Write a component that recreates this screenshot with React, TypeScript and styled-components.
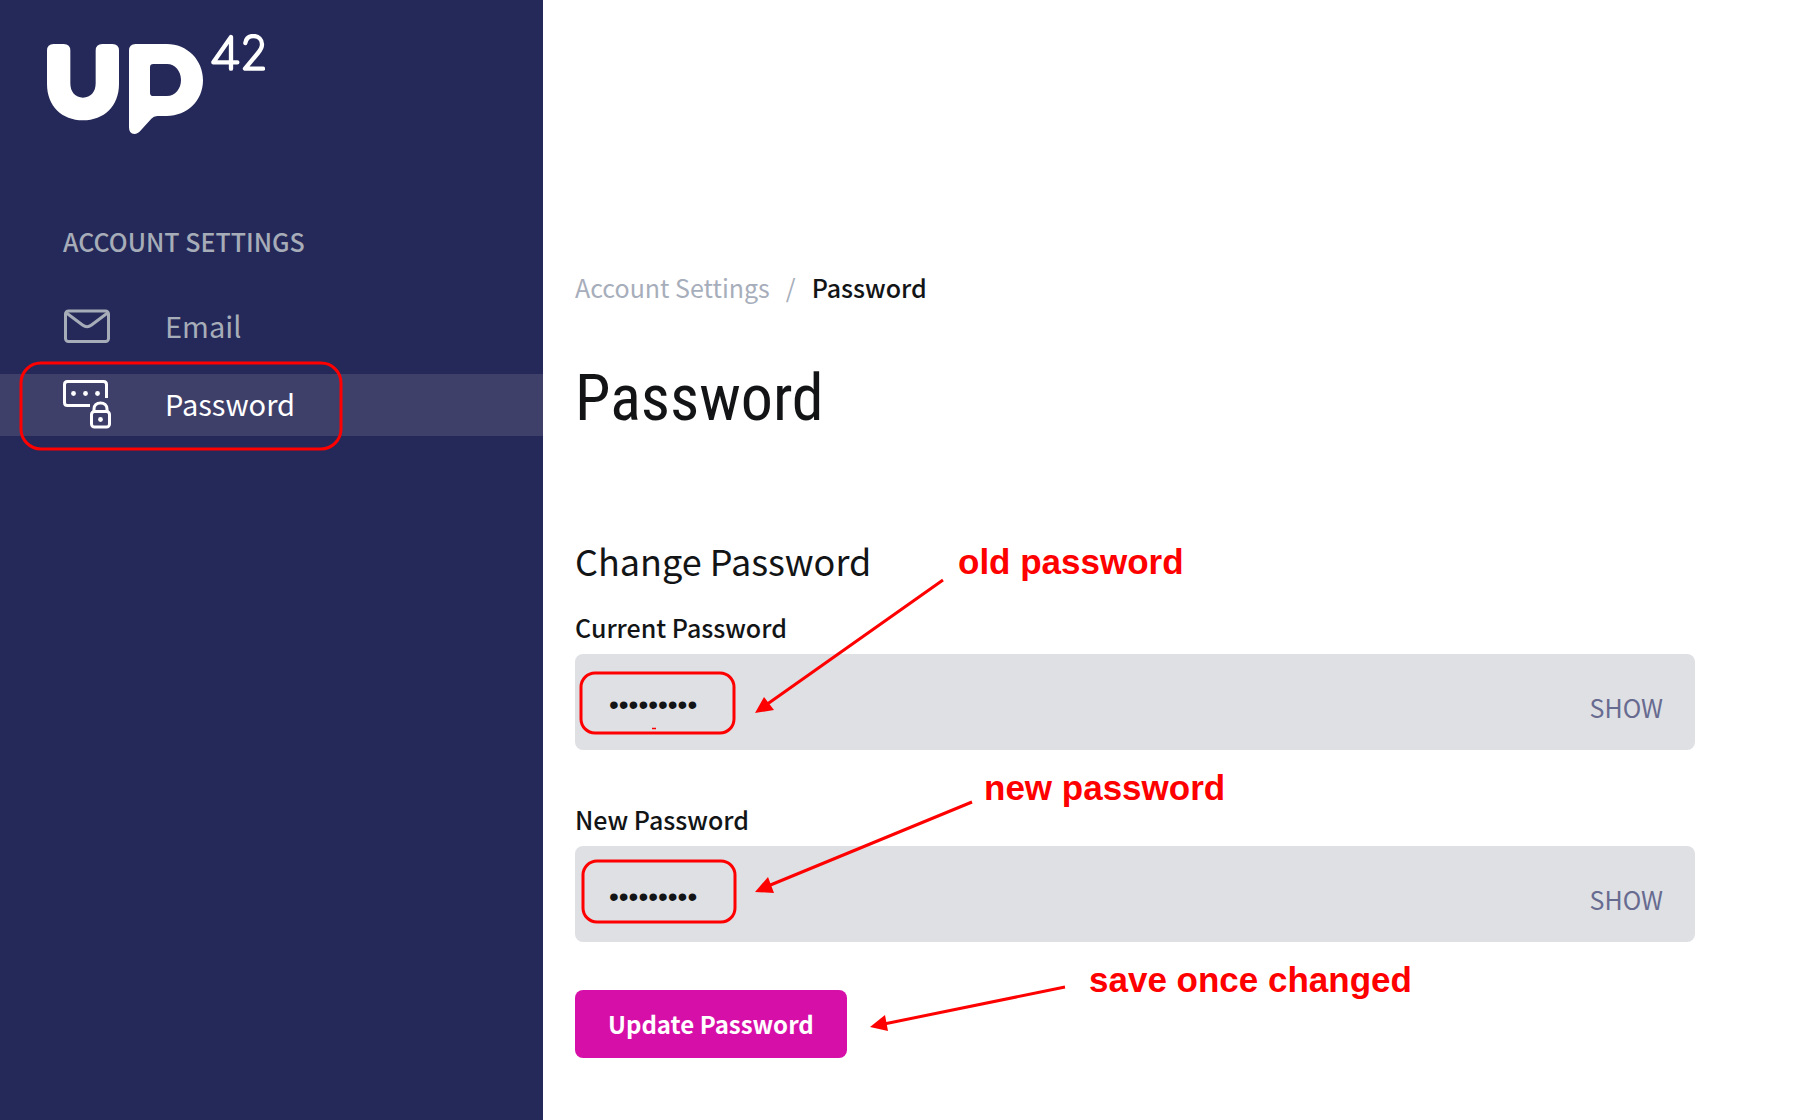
import React, { useState } from "react";
import styled, { createGlobalStyle } from "styled-components";

const sans = `"Source Sans Pro", "Noto Sans CJK SC", "Noto Sans", sans-serif`;

const GlobalStyle = createGlobalStyle`
  *, *::before, *::after { box-sizing: border-box; }
  body {
    margin: 0;
    background: #ffffff;
    color: #121416;
    font-family: ${sans};
    font-size: 25px;
  }
  button, input { font: inherit; }
`;

const Page = styled.div`
  position: relative;
  display: flex;
  min-height: 100vh;
`;

const Sidebar = styled.aside`
  flex: 0 0 543px;
  padding-top: 34px;
  background: #252959;
`;

const HomeLink = styled.a`
  display: block;
  width: 218px;
  height: 100px;
  margin-left: 47px;
  svg { display: block; }
`;

const NavHeading = styled.h2`
  margin: 89px 0 37px 63px;
  color: #a7adb8;
  font-size: 25px;
  font-weight: 500;
  line-height: 36px;
`;

const NavList = styled.ul`
  display: flex;
  flex-direction: column;
  gap: 16px;
  margin: 0;
  padding: 0;
  list-style: none;
`;

const NavLink = styled.a<{ $active?: boolean }>`
  display: flex;
  align-items: center;
  gap: 54px;
  height: 62px;
  padding-left: 63px;
  background: ${(p) => (p.$active ? "#3f406a" : "transparent")};
  color: ${(p) => (p.$active ? "#ffffff" : "#a7adb8")};
  font-size: 29px;
  line-height: 58px;
  text-decoration: none;
`;

const NavText = styled.span`
  padding-bottom: 4px;
`;

const Main = styled.main`
  flex: 1;
  padding: 267px 112px 62px 32px;
`;

const Breadcrumb = styled.nav`
  display: flex;
  gap: 16px;
  color: #a7aebb;
  line-height: 40px;
  a { color: inherit; text-decoration: none; }
  strong { color: #121416; font-weight: 500; }
`;

const Title = styled.h1`
  margin: 52px 0 97px;
  font-family: "Roboto Condensed", Roboto, sans-serif;
  font-size: 64px;
  font-weight: 400;
  line-height: 80px;
`;

const SectionTitle = styled.h2`
  margin: 0 0 25px;
  font-size: 36px;
  font-weight: 400;
  line-height: 48px;
`;

const Form = styled.form`
  display: flex;
  flex-direction: column;
  align-items: flex-start;
  gap: 48px;
`;

const Fields = styled.div`
  display: flex;
  flex-direction: column;
  gap: 51px;
  width: 100%;
`;

const Label = styled.label`
  display: block;
  margin-bottom: 9px;
  font-weight: 500;
  line-height: 36px;
`;

const InputBox = styled.div`
  display: flex;
  height: 96px;
  padding-top: 6px;
  border-radius: 8px;
  background: #dfe0e4;
`;

const Input = styled.input`
  flex: 1;
  min-width: 0;
  padding: 0 0 0 34px;
  border: 0;
  outline: 0;
  background: transparent;
  color: #121416;
  font-family: "Liberation Sans", Arial, sans-serif;
  font-size: 28px;
`;

const Toggle = styled.button`
  padding: 4px 32px 0;
  border: 0;
  background: transparent;
  color: #686b90;
  line-height: 36px;
  cursor: pointer;
`;

const Submit = styled.button`
  height: 68px;
  padding: 0 33px;
  border: 0;
  border-radius: 8px;
  background: #d60fa8;
  color: #ffffff;
  font-size: 24px;
  font-weight: 700;
  line-height: 36px;
  cursor: pointer;
`;

const Annotations = styled.div`
  position: absolute;
  inset: 0;
  pointer-events: none;
  svg { position: absolute; top: 0; left: 0; }
`;

const Note = styled.span<{ $x: number; $y: number }>`
  position: absolute;
  left: ${(p) => p.$x}px;
  top: ${(p) => p.$y}px;
  color: #ff0000;
  font-family: "Liberation Sans", Arial, sans-serif;
  font-size: 35px;
  font-weight: 700;
  line-height: 40px;
  white-space: nowrap;
`;

const Logo = () => (
  <svg width="218" height="101" viewBox="51 42 654 303" role="img" aria-label="UP42">
    <g fill="#fff">
      <path d="M51 92Q51 72 71 72H101Q121 72 121 92V190C121 216 136 233 159 233S197 216 197 190V92Q197 72 217 72H247Q267 72 267 92V192C267 258 222 301 159 301S51 258 51 192Z" />
      <path
        fillRule="evenodd"
        d="M297 92Q297 72 317 72H410C472 72 519 120 519 181S472 288 410 288H382Q371 288 364 296L334 329Q323 342 313 342Q297 342 297 322ZM370 132Q360 132 360 142V218Q360 228 370 228H411C436 228 453 206 453 180S436 132 411 132Z"
      />
    </g>
    <path
      d="M622 127H550L603 51V146M646 69C648 55 657 48 670 48C686 48 696 59 696 73C696 84 691 91 684 99L645 146H699"
      fill="none"
      stroke="#fff"
      strokeWidth="13"
      strokeLinecap="round"
      strokeLinejoin="round"
    />
  </svg>
);

const MailIcon = () => (
  <svg width="48" height="48" viewBox="0 0 48 48" fill="none" stroke="currentColor" strokeWidth="3" aria-hidden="true">
    <rect x="2.5" y="8" width="43" height="30.5" rx="3" />
    <path d="M3.5 10L19.5 22Q24 25.5 28.5 22L44.5 10" />
  </svg>
);

const PasswordIcon = () => (
  <svg width="48" height="50" viewBox="0 0 48 50" fill="none" stroke="currentColor" strokeWidth="3" aria-hidden="true">
    <path d="M27 25.5H4.5Q1.5 25.5 1.5 22.5V4.5Q1.5 1.5 4.5 1.5H40.5Q43.5 1.5 43.5 4.5V18" />
    <g fill="currentColor" stroke="none">
      <circle cx="10.5" cy="13.5" r="2.4" />
      <circle cx="22.5" cy="13.5" r="2.4" />
      <circle cx="34.5" cy="13.5" r="2.4" />
      <circle cx="37.5" cy="39.5" r="2.4" />
    </g>
    <rect x="28.5" y="31.5" width="18" height="15.5" rx="3" />
    <path d="M31 31.5V29C31 25.5 33.5 23 37.5 23S44 25.5 44 29V31.5" />
  </svg>
);

type PasswordFieldProps = { id: string; label: string };

const PasswordField = ({ id, label }: PasswordFieldProps) => {
  const [visible, setVisible] = useState(false);
  return (
    <div>
      <Label htmlFor={id}>{label}</Label>
      <InputBox>
        <Input id={id} type={visible ? "text" : "password"} defaultValue="satellite" />
        <Toggle type="button" onClick={() => setVisible(!visible)}>
          {visible ? "HIDE" : "SHOW"}
        </Toggle>
      </InputBox>
    </div>
  );
};

export default function App() {
  return (
    <>
      <GlobalStyle />
      <Page>
        <Sidebar>
          <HomeLink href="#home">
            <Logo />
          </HomeLink>
          <NavHeading>ACCOUNT SETTINGS</NavHeading>
          <NavList>
            <li>
              <NavLink href="#email">
                <MailIcon />
                <NavText>Email</NavText>
              </NavLink>
            </li>
            <li>
              <NavLink href="#password" $active aria-current="page">
                <PasswordIcon />
                <NavText>Password</NavText>
              </NavLink>
            </li>
          </NavList>
        </Sidebar>
        <Main>
          <Breadcrumb aria-label="Breadcrumb">
            <a href="#settings">Account Settings</a>
            <span>/</span>
            <strong>Password</strong>
          </Breadcrumb>
          <Title>Password</Title>
          <SectionTitle>Change Password</SectionTitle>
          <Form onSubmit={(e) => e.preventDefault()}>
            <Fields>
              <PasswordField id="current-password" label="Current Password" />
              <PasswordField id="new-password" label="New Password" />
            </Fields>
            <Submit type="submit">Update Password</Submit>
          </Form>
        </Main>
        <Annotations>
          <svg width="1440" height="1100" viewBox="0 0 1440 1100" fill="none" stroke="#f00" strokeWidth="3" aria-hidden="true">
            <rect x="21" y="363" width="320" height="86" rx="20" />
            <rect x="581" y="673" width="153" height="60" rx="14" />
            <rect x="583" y="861" width="152" height="61" rx="14" />
            <path d="M652 728.5H656" strokeWidth="1.5" />
            <path d="M943 580L766 705M972 802L768 886M1065 987L884 1024" />
            <g fill="#f00" stroke="none">
              <path d="M755 713L764 697L774 710Z" />
              <path d="M755 892L768 877L774 893Z" />
              <path d="M870 1027L885 1015L888 1031Z" />
            </g>
          </svg>
          <Note $x={958} $y={542}>old password</Note>
          <Note $x={984} $y={768}>new password</Note>
          <Note $x={1089} $y={960}>save once changed</Note>
        </Annotations>
      </Page>
    </>
  );
}
